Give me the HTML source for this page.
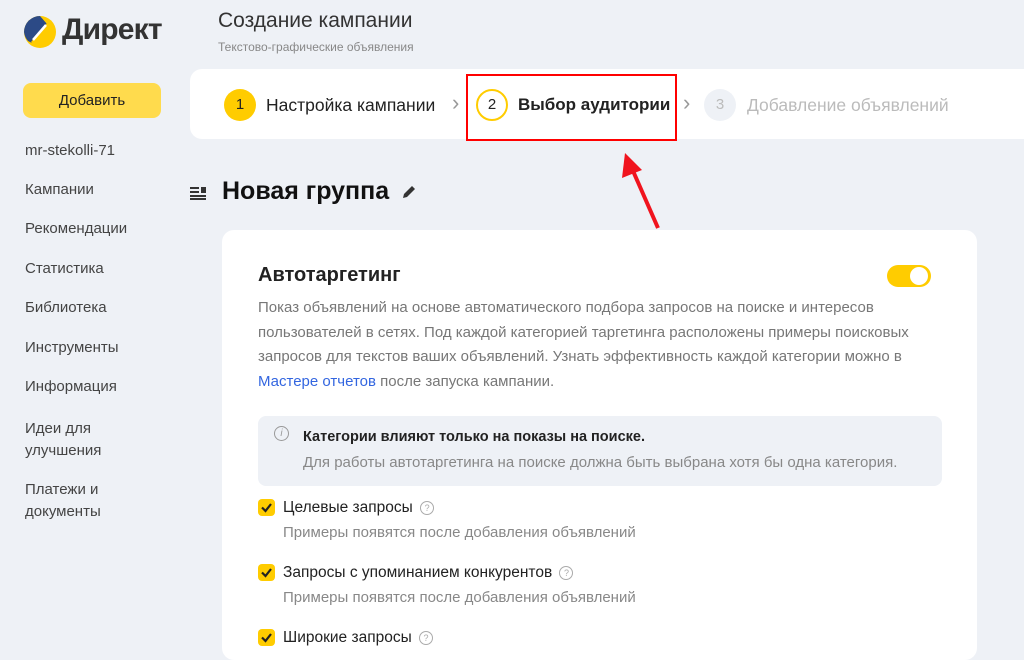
<!DOCTYPE html>
<html><head><meta charset="utf-8"><style>
body{margin:0;width:1024px;height:646px;overflow:hidden;background:#eef1f6;font-family:"Liberation Sans",sans-serif;position:relative;color:#222}
.a{position:absolute;white-space:nowrap}
.nav{font-size:15px;color:#444;left:25px}
.q{display:inline-block;width:12px;height:12px;border:1px solid #aaa;border-radius:50%;font-size:9px;line-height:12px;text-align:center;color:#aaa;vertical-align:1px;margin-left:3px}
.cb{width:17px;height:17px;background:#fc0;border-radius:4px}
.chev{font-size:22px;color:#999;top:90px}
</style></head><body>
<svg class="a" style="left:23px;top:15px" width="34" height="34" viewBox="0 0 34 34"><circle cx="17" cy="17" r="16" fill="#fc0"/><path d="M1 17A16 16 0 0 1 17 1L24 9 9 28 5 26A16 16 0 0 1 1 17Z" fill="#2c4a86"/><path d="M8 27L24 8 27 12 12 31Z" fill="#fc0"/><path d="M10 25L23 10" stroke="#fff" stroke-width="2.5"/></svg>
<div class="a" style="left:62px;top:13px;font-size:30px;font-weight:bold;color:#333;letter-spacing:-0.8px">Директ</div>
<div class="a" style="left:218px;top:9px;font-size:21px;color:#333">Создание кампании</div>
<div class="a" style="left:218px;top:40px;font-size:12px;color:#888">Текстово-графические объявления</div>
<div class="a" style="left:23px;top:83px;width:138px;height:35px;background:#ffdb4d;border-radius:8px;text-align:center;line-height:35px;font-size:15px;color:#222">Добавить</div>
<div class="a nav" style="top:142px">mr-stekolli-71</div>
<div class="a nav" style="top:181px">Кампании</div>
<div class="a nav" style="top:220px">Рекомендации</div>
<div class="a nav" style="top:260px">Статистика</div>
<div class="a nav" style="top:299px">Библиотека</div>
<div class="a nav" style="top:339px">Инструменты</div>
<div class="a nav" style="top:378px">Информация</div>
<div class="a nav" style="top:418px;line-height:22px">Идеи для<br>улучшения</div>
<div class="a nav" style="top:479px;line-height:22px">Платежи и<br>документы</div>
<div class="a" style="left:190px;top:69px;width:834px;height:70px;background:#fff;border-radius:12px 0 0 12px"></div>
<div class="a" style="left:224px;top:89px;width:32px;height:32px;border-radius:50%;background:#fc0;text-align:center;line-height:32px;font-size:15px">1</div>
<div class="a" style="left:266px;top:95px;font-size:17.5px">Настройка кампании</div>
<div class="a chev" style="left:452px">›</div>
<div class="a" style="left:476px;top:89px;width:28px;height:28px;border-radius:50%;border:2px solid #fc0;text-align:center;line-height:28px;font-size:15px">2</div>
<div class="a" style="left:518px;top:95px;font-size:17px;font-weight:bold">Выбор аудитории</div>
<div class="a chev" style="left:683px">›</div>
<div class="a" style="left:704px;top:89px;width:32px;height:32px;border-radius:50%;background:#eef1f6;color:#bbb;text-align:center;line-height:32px;font-size:15px">3</div>
<div class="a" style="left:747px;top:95px;font-size:17.5px;color:#bbb">Добавление объявлений</div>
<div class="a" style="left:466px;top:74px;width:207px;height:63px;border:2.5px solid #f00"></div>
<svg class="a" style="left:600px;top:140px" width="80" height="100"><path d="M58 88L30 24" stroke="#f0141e" stroke-width="4" fill="none"/><path d="M25 13L22 38 42 30Z" fill="#f0141e"/></svg>
<svg class="a" style="left:190px;top:186px" width="16" height="14"><rect x="0" y="1" width="9" height="2" fill="#333"/><rect x="11" y="1" width="5" height="6" fill="#333"/><rect x="0" y="5" width="9" height="2" fill="#333"/><rect x="0" y="9" width="16" height="2" fill="#333"/><rect x="0" y="12" width="16" height="2" fill="#333"/></svg>
<div class="a" style="left:222px;top:177px;font-size:25px;font-weight:bold;color:#111">Новая группа</div>
<svg class="a" style="left:401px;top:184px" width="16" height="16"><path d="M2 14L3 10 11 2 14 5 6 13Z" fill="#333"/></svg>
<div class="a" style="left:222px;top:230px;width:755px;height:430px;background:#fff;border-radius:12px"></div>
<div class="a" style="left:258px;top:264px;font-size:20px;font-weight:bold;color:#222">Автотаргетинг</div>
<div class="a" style="left:887px;top:265px;width:44px;height:22px;border-radius:11px;background:#fc0"></div>
<div class="a" style="left:910px;top:267px;width:18px;height:18px;border-radius:50%;background:#fff"></div>
<div class="a" style="left:258px;top:296px;font-size:15px;line-height:24.5px;color:#777">Показ объявлений на основе автоматического подбора запросов на поиске и интересов<br>пользователей в сетях. Под каждой категорией таргетинга расположены примеры поисковых<br>запросов для текстов ваших объявлений. Узнать эффективность каждой категории можно в<br><span style="color:#3366e0">Мастере отчетов</span> после запуска кампании.</div>
<div class="a" style="left:258px;top:416px;width:684px;height:70px;background:#eef1f6;border-radius:8px"></div>
<div class="a" style="left:274px;top:426px;width:13px;height:13px;border:1px solid #999;border-radius:50%;font-size:10px;text-align:center;line-height:13px;color:#999;font-style:italic">i</div>
<div class="a" style="left:303px;top:429px;font-size:14.5px;color:#222;font-weight:bold">Категории влияют только на показы на поиске.</div>
<div class="a" style="left:303px;top:454px;font-size:15px;color:#888">Для работы автотаргетинга на поиске должна быть выбрана хотя бы одна категория.</div>
<div class="a cb" style="left:258px;top:499px"></div><svg class="a" style="left:258px;top:499px" width="17" height="17"><path d="M4 8.5L7.5 12 13 5" stroke="#222" stroke-width="2.2" fill="none"/></svg>
<div class="a" style="left:283px;top:499px;font-size:15.5px">Целевые запросы <span class="q">?</span></div>
<div class="a" style="left:283px;top:524px;font-size:15px;color:#888">Примеры появятся после добавления объявлений</div>
<div class="a cb" style="left:258px;top:564px"></div><svg class="a" style="left:258px;top:564px" width="17" height="17"><path d="M4 8.5L7.5 12 13 5" stroke="#222" stroke-width="2.2" fill="none"/></svg>
<div class="a" style="left:283px;top:564px;font-size:15.5px">Запросы с упоминанием конкурентов <span class="q">?</span></div>
<div class="a" style="left:283px;top:589px;font-size:15px;color:#888">Примеры появятся после добавления объявлений</div>
<div class="a cb" style="left:258px;top:629px"></div><svg class="a" style="left:258px;top:629px" width="17" height="17"><path d="M4 8.5L7.5 12 13 5" stroke="#222" stroke-width="2.2" fill="none"/></svg>
<div class="a" style="left:283px;top:629px;font-size:15.5px">Широкие запросы <span class="q">?</span></div>
</body></html>
